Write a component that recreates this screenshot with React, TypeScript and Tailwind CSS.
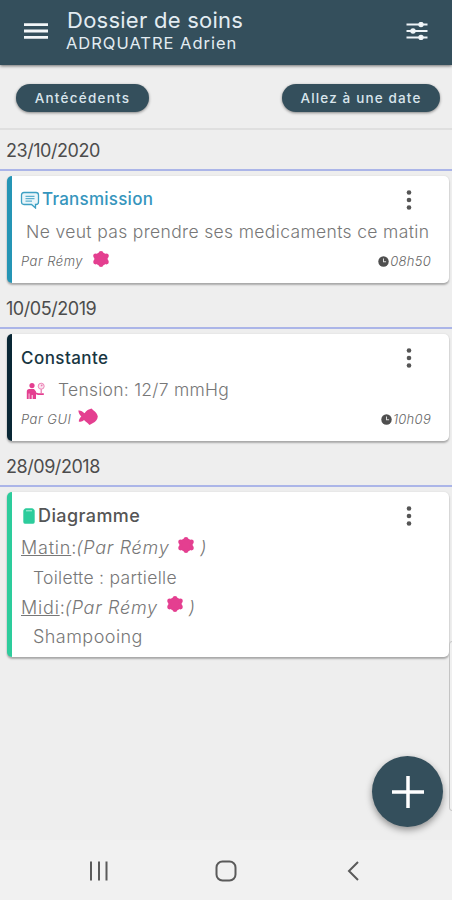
import React from "react";

const Flower = ({ className = "" }: { className?: string }) => (
  <svg viewBox="0 0 18 18" className={`h-[18px] w-[18px] shrink-0 fill-[#e43f90] ${className}`}>
    <circle cx="9" cy="9" r="6.800" />
    <circle cx="9" cy="3.200" r="2.300" />
    <circle cx="9" cy="14.800" r="2.300" />
    <circle cx="3.600" cy="6" r="2.400" />
    <circle cx="14.400" cy="6" r="2.400" />
    <circle cx="3.600" cy="12" r="2.400" />
    <circle cx="14.400" cy="12" r="2.400" />
  </svg>
);

const Fish = () => (
  <svg viewBox="0 0 20 18" className="mb-1.5 ml-[7px] h-[18px] w-5 shrink-0 fill-[#e43f90]">
    <path d="M0.300 2.500C2.500 2 4.500 3.500 6.500 5.200C8 3.500 9 2.300 10.200 1.700L13.500 0.500L15.300 2.200C17.500 3.700 19.500 6 19.800 8.500C19.500 11.500 17.500 14 15 15L11.500 17L9.500 15C8 14 7 13 6 12C4.500 13.500 3 14 0.800 13.500C0.800 11.500 2 9.800 3.300 8.500C1.800 7 0.600 5 0.300 2.500Z" />
  </svg>
);

const Patient = () => (
  <svg viewBox="0 0 20 18" className="mt-0.5 h-[18px] w-5 shrink-0">
    <circle cx="6" cy="3.600" r="2.600" fill="#e43f90" />
    <path d="M0.800 17V9.500Q0.800 7 3.300 7H8L10 9.500V17H3.400V11.500H2.700V17Z" fill="#e43f90" />
    <path d="M6.200 17V13" stroke="#fff" strokeWidth="0.900" />
    <path d="M10 10.500L12.500 11.300H17.800V13H12L10 12.300Z" fill="#e43f90" />
    <circle cx="15.200" cy="4.200" r="3" fill="#fbe3ef" stroke="#ee86b8" strokeWidth="1" />
    <path d="M15.200 4.200L16.300 2.700M15.200 7.200V11" stroke="#e875ad" strokeWidth="1.200" />
  </svg>
);

const Bubble = () => (
  <svg viewBox="0 0 20 18" className="-ml-px h-[18px] w-5 shrink-0" fill="none" stroke="#3da0c3" strokeWidth="1.300">
    <path d="M4 1.500H16Q18.500 1.500 18.500 4V11Q18.500 13.500 16 13.500H15.500V17L11.500 13.500H4Q1.500 13.500 1.500 11V4Q1.500 1.500 4 1.500Z" fill="#e9f5fa" />
    <path d="M5.500 5.300H14.500M5.500 7.700H14.500M5.500 10.100H12" strokeWidth="1" />
  </svg>
);

const Jar = () => (
  <svg viewBox="0 0 12 16" className="mr-[3px] ml-0.5 h-4 w-3 shrink-0">
    <rect x="0.300" y="1.200" width="11.400" height="14.500" rx="1.600" fill="#2dcc9c" />
    <rect x="1.300" y="0.300" width="9.400" height="4" rx="1.500" fill="#2dcc9c" />
    <path d="M3 2.800H9" stroke="#b5f0de" strokeWidth="1" />
  </svg>
);

const Clock = () => (
  <svg viewBox="0 0 12 12" className="mr-px mb-0.5 h-[11px] w-[11px] shrink-0">
    <circle cx="6" cy="6" r="5.700" fill="#4f4f4f" />
    <path d="M6 2.800V6.300H8.800" fill="none" stroke="#ddd" strokeWidth="1.100" />
  </svg>
);

const Dots = () => (
  <svg viewBox="0 0 6 20" className="mb-px h-5 w-1.5 shrink-0 fill-[#555]">
    <circle cx="3" cy="2.500" r="2.300" />
    <circle cx="3" cy="10" r="2.300" />
    <circle cx="3" cy="17.500" r="2.300" />
  </svg>
);

const DateRow = ({ children, first = false }: { children: string; first?: boolean }) => (
  <div
    className={`flex shrink-0 items-center border-b-2 border-[#abb5e8] pl-[6px] text-[18px] leading-6 tracking-[-0.45px] text-[#4c4c4c] ${
      first ? "h-[41px] pt-0.5" : "h-[46px] pt-2"
    }`}
  >
    <span className="whitespace-nowrap">{children}</span>
  </div>
);

const Card = ({ edge, height, children }: { edge: string; height: string; children: React.ReactNode }) => (
  <section
    className={`mt-[5px] mr-[3px] ml-[7px] flex shrink-0 flex-col rounded-[5px] border-l-[5px] bg-white pt-3 pr-[18px] pl-[9px] shadow-[0_2px_2px_rgba(0,0,0,0.28),0_0_2px_rgba(0,0,0,0.10)] ${edge} ${height}`}
  >
    {children}
  </section>
);

const TitleRow = ({ children }: { children: React.ReactNode }) => (
  <div className="flex h-6 shrink-0 items-center justify-between pr-[19px] text-[17px] font-medium whitespace-nowrap">
    <div className="flex items-center">{children}</div>
    <Dots />
  </div>
);

const Footer = ({ author, icon, time }: { author: string; icon: React.ReactNode; time: string }) => (
  <div className="flex h-5 shrink-0 items-center justify-between text-[13px] font-light text-[#666] italic">
    <div className="flex items-center">
      <span className="tracking-[0.5px]">{author}</span>
      {icon}
    </div>
    <div className="flex items-center">
      <Clock />
      <span className="tracking-[0.3px]">{time}</span>
    </div>
  </div>
);

const Period = ({ name, className }: { name: string; className: string }) => (
  <div className={`flex shrink-0 items-center text-[18px] font-light whitespace-nowrap ${className}`}>
    <span className="tracking-[0.8px] underline">{name}</span>
    <span>:</span>
    <span className="tracking-[0.7px] italic">(Par Rémy</span>
    <Flower className="mb-1.5 ml-2" />
    <span className="ml-[5px] italic">)</span>
  </div>
);

export default function App() {
  return (
    <div className="relative flex h-[900px] w-[452px] flex-col overflow-hidden bg-[#eeeeee] font-['Inter',sans-serif]">
      <header className="z-10 flex h-[65px] shrink-0 items-center bg-[#344f5c] pr-6 pb-1 pl-6 text-[#e3ecf2] shadow-[0_1px_3px_rgba(0,0,0,0.55)]">
        <svg viewBox="0 0 24 18" className="h-[18px] w-6 shrink-0 fill-[#f2f6f8]">
          <path d="M0 1.200H24V4H0ZM0 7.600H24V10.400H0ZM0 14H24V16.800H0Z" />
        </svg>
        <div className="ml-[19px] flex flex-1 flex-col pt-0.5 whitespace-nowrap">
          <span className="text-[22px] leading-[23px] tracking-[0.25px]">Dossier de soins</span>
          <span className="-ml-px text-[16.5px] leading-[23px] tracking-[0.98px]">ADRQUATRE Adrien</span>
        </div>
        <svg viewBox="0 0 22 18" className="h-[18px] w-[22px] shrink-0" stroke="#eef4f7" strokeWidth="2">
          <path d="M0.500 2.500H21.500M0.500 9H21.500M0.500 15.500H21.500" />
          <circle cx="15" cy="2.500" r="1.700" fill="#fff" />
          <circle cx="7" cy="9" r="1.700" fill="#fff" />
          <circle cx="15" cy="15.500" r="1.700" fill="#fff" />
        </svg>
      </header>

      <div className="flex h-[65px] shrink-0 items-center justify-between border-b-2 border-[#dfdfdf] pt-0.5 pr-3 pl-4 text-[13.5px] font-medium whitespace-nowrap text-[#d9e5ec]">
        <button className="flex h-7 w-[133px] items-center justify-center rounded-full bg-[#344f5c] pt-px tracking-[1.25px] shadow-[0_1px_3px_rgba(0,0,0,0.45)]">
          Antécédents
        </button>
        <button className="flex h-7 w-[158px] items-center justify-center rounded-full bg-[#344f5c] pt-px tracking-[1.15px] shadow-[0_1px_3px_rgba(0,0,0,0.45)]">
          Allez à une date
        </button>
      </div>

      <main className="flex flex-1 flex-col text-[#777]">
        <DateRow first>23/10/2020</DateRow>
        <Card edge="border-[#2595b5]" height="h-[107px]">
          <TitleRow>
            <Bubble />
            <span className="ml-0.5 tracking-[0.25px] text-[#3595bd]">Transmission</span>
          </TitleRow>
          <div className="flex h-10 items-center pl-[5px] text-[17.5px] font-light tracking-[0.35px] whitespace-nowrap">
            Ne veut pas prendre ses medicaments ce matin
          </div>
          <Footer author="Par Rémy" icon={<Flower className="mb-1.5 ml-[9px]" />} time="08h50" />
        </Card>

        <DateRow>10/05/2019</DateRow>
        <Card edge="border-[#092735]" height="h-[107px]">
          <TitleRow>
            <span className="pt-px tracking-[0.45px] text-[#183642]">Constante</span>
          </TitleRow>
          <div className="flex h-10 items-center pl-[5px] text-[17.5px] font-light whitespace-nowrap">
            <Patient />
            <span className="ml-3 pt-px tracking-[0.26px]">Tension: 12/7 mmHg</span>
          </div>
          <Footer author="Par GUI" icon={<Fish />} time="10h09" />
        </Card>

        <DateRow>28/09/2018</DateRow>
        <Card edge="border-[#2dcc9c]" height="h-[165px]">
          <TitleRow>
            <Jar />
            <span className="text-[18px] leading-5 tracking-[0.4px] text-[#555]">Diagramme</span>
          </TitleRow>
          <Period name="Matin" className="h-[35px] pt-1" />
          <div className="flex h-[26px] shrink-0 items-center pt-1 pl-3 text-[17.5px] font-light tracking-[0.3px]">
            Toilette : partielle
          </div>
          <Period name="Midi" className="h-9" />
          <div className="flex h-[22px] shrink-0 items-center pl-3 text-[18px] font-light tracking-[0.45px]">
            Shampooing
          </div>
        </Card>
      </main>

      <div className="absolute top-[641px] -right-1 h-[170px] w-[7px] rounded-[3px] border border-[#c4c4c4] bg-[#f0f0f0]" />
      <button className="absolute top-[756px] left-[372px] flex h-[71px] w-[71px] items-center justify-center rounded-full bg-[#344f5c] shadow-[0_3px_7px_rgba(0,0,0,0.4)]">
        <svg viewBox="0 0 32 32" className="h-8 w-8" stroke="#fff" strokeWidth="3.500">
          <path d="M16 0V32M0 16H32" />
        </svg>
      </button>

      <nav className="flex h-[60px] shrink-0 items-center bg-[#f1f1f1] pt-0.5 pl-[89px]">
        <svg viewBox="0 0 20 20" className="h-5 w-5" stroke="#5a5a5a" strokeWidth="2">
          <path d="M2 0.500V19.500M10 0.500V19.500M17.500 0.500V19.500" />
        </svg>
        <svg viewBox="0 0 22 22" className="ml-[106px] h-[22px] w-[22px]" fill="none" stroke="#5a5a5a" strokeWidth="2">
          <rect x="1.500" y="1.500" width="19" height="19" rx="6" />
        </svg>
        <svg viewBox="0 0 12 20" className="ml-[110px] h-5 w-3" fill="none" stroke="#5a5a5a" strokeWidth="2">
          <path d="M11 1L2 10L11 19" />
        </svg>
      </nav>
    </div>
  );
}
